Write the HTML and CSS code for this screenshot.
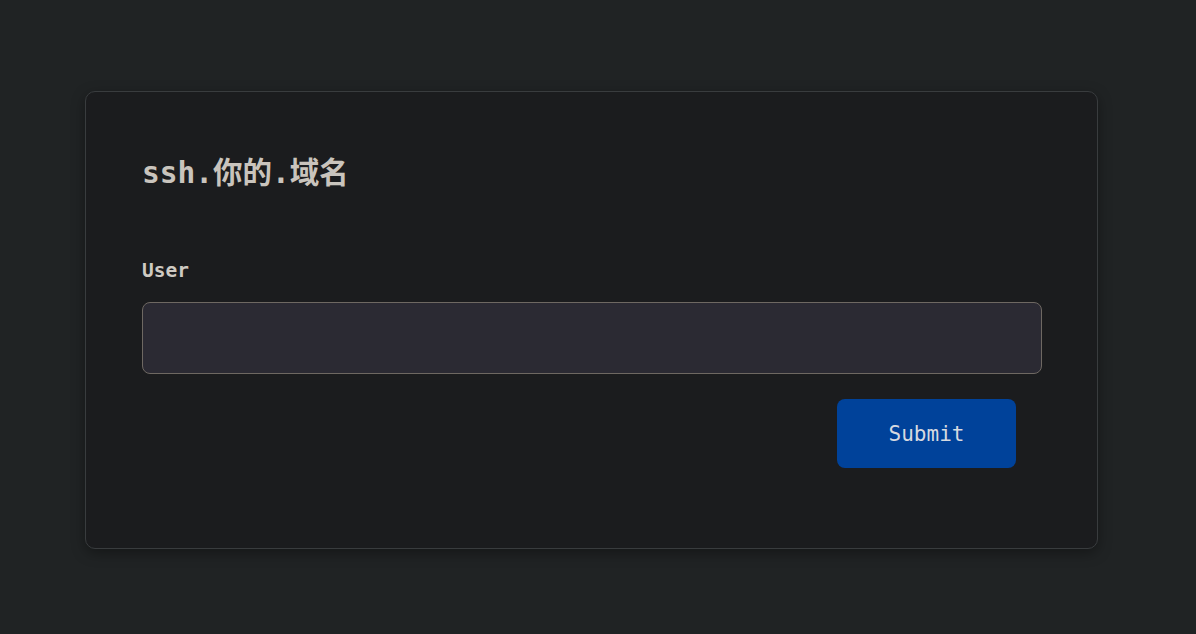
FILE: index.html
```html
<!DOCTYPE html>
<html>
<head>
<meta charset="utf-8">
<link rel="stylesheet" href="styles.css">
</head>
<body>
<div class="card">
  <h1 class="title">ssh.你的.域名</h1>
  <form class="form">
    <label class="label" for="user">User</label>
    <input class="input" id="user" type="text">
    <div class="actions">
      <button class="btn" type="button">Submit</button>
    </div>
  </form>
</div>
</body>
</html>
```

FILE: styles.css
```css
html, body {
  margin: 0;
  padding: 0;
  background: #202324;
  height: 100%;
}
body {
  font-family: "DejaVu Sans Mono", "Noto Sans CJK SC", monospace;
  color: #cdc8c1;
  padding-top: 91px;
  box-sizing: border-box;
}
.card {
  margin-left: 85px;
  width: 1013px;
  height: 458px;
  box-sizing: border-box;
  background: #1b1c1e;
  border: 1px solid #393c3e;
  border-radius: 10px;
  box-shadow: 0 4px 14px rgba(0,0,0,0.35);
  padding: 61px 55px 0 56px;
}
.title {
  margin: 0;
  font-size: 29.5px;
  font-weight: bold;
  line-height: 40px;
  color: #c9c4bd;
}
.form {
  display: flex;
  flex-direction: column;
  margin-top: 64px;
}
.label {
  font-size: 19.5px;
  font-weight: bold;
  line-height: 28px;
  color: #cfcac3;
}
.input {
  margin-top: 17px;
  height: 72px;
  box-sizing: border-box;
  width: 900px;
  background: #2b2a33;
  border: 1px solid #6e6862;
  border-radius: 8px;
  outline: none;
}
.actions {
  display: flex;
  justify-content: flex-end;
  padding-right: 26px;
  margin-top: 25px;
}
.btn {
  width: 179px;
  height: 69px;
  background: #00429a;
  border: none;
  border-radius: 8px;
  color: #d6d9e0;
  font-family: "DejaVu Sans Mono", monospace;
  font-size: 21px;
  padding: 0;
}
```
